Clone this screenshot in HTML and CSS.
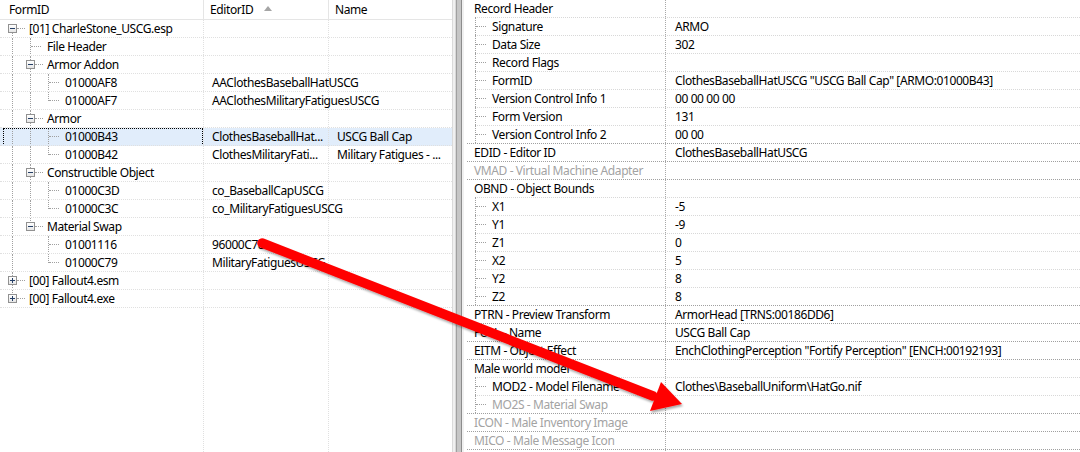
FILE: index.html
```html
<!DOCTYPE html>
<html>
<head>
<meta charset="utf-8">
<link rel="stylesheet" href="styles.css">
</head>
<body>
<div class="left">
  <div class="hdr">
    <div class="h1">FormID</div>
    <div class="h2">EditorID <span class="sort"></span></div>
    <div class="h3">Name</div>
  </div>
  <div class="rows">
    <div class="row"><div class="c1"><span class="g box dn"><i class="ex"></i></span><span class="lbl">[01] CharleStone_USCG.esp</span></div><div class="c2"></div><div class="c3"></div></div>
    <div class="row"><div class="c1"><span class="g v"></span><span class="g t"></span><span class="lbl">File Header</span></div><div class="c2"></div><div class="c3"></div></div>
    <div class="row"><div class="c1"><span class="g v"></span><span class="g box up dn"><i class="ex"></i></span><span class="lbl">Armor Addon</span></div><div class="c2"></div><div class="c3"></div></div>
    <div class="row"><div class="c1"><span class="g v"></span><span class="g v"></span><span class="g t"></span><span class="lbl">01000AF8</span></div><div class="c2">AAClothesBaseballHatUSCG</div><div class="c3"></div></div>
    <div class="row"><div class="c1"><span class="g v"></span><span class="g v"></span><span class="g l"></span><span class="lbl">01000AF7</span></div><div class="c2">AAClothesMilitaryFatiguesUSCG</div><div class="c3"></div></div>
    <div class="row"><div class="c1"><span class="g v"></span><span class="g box up dn"><i class="ex"></i></span><span class="lbl">Armor</span></div><div class="c2"></div><div class="c3"></div></div>
    <div class="row sel"><div class="c1"><span class="g v"></span><span class="g v"></span><span class="g t"></span><span class="lbl">01000B43</span></div><div class="c2">ClothesBaseballHat...</div><div class="c3">USCG Ball Cap</div></div>
    <div class="row"><div class="c1"><span class="g v"></span><span class="g v"></span><span class="g l"></span><span class="lbl">01000B42</span></div><div class="c2">ClothesMilitaryFati...</div><div class="c3">Military Fatigues - ...</div></div>
    <div class="row"><div class="c1"><span class="g v"></span><span class="g box up dn"><i class="ex"></i></span><span class="lbl">Constructible Object</span></div><div class="c2"></div><div class="c3"></div></div>
    <div class="row"><div class="c1"><span class="g v"></span><span class="g v"></span><span class="g t"></span><span class="lbl">01000C3D</span></div><div class="c2">co_BaseballCapUSCG</div><div class="c3"></div></div>
    <div class="row"><div class="c1"><span class="g v"></span><span class="g v"></span><span class="g l"></span><span class="lbl">01000C3C</span></div><div class="c2">co_MilitaryFatiguesUSCG</div><div class="c3"></div></div>
    <div class="row"><div class="c1"><span class="g v"></span><span class="g box up"><i class="ex"></i></span><span class="lbl">Material Swap</span></div><div class="c2"></div><div class="c3"></div></div>
    <div class="row"><div class="c1"><span class="g v"></span><span class="g"></span><span class="g t"></span><span class="lbl">01001116</span></div><div class="c2">96000C78</div><div class="c3"></div></div>
    <div class="row"><div class="c1"><span class="g v"></span><span class="g"></span><span class="g l"></span><span class="lbl">01000C79</span></div><div class="c2">MilitaryFatiguesUSCG</div><div class="c3"></div></div>
    <div class="row"><div class="c1"><span class="g box up dn"><i class="ex plus"></i></span><span class="lbl">[00] Fallout4.esm</span></div><div class="c2"></div><div class="c3"></div></div>
    <div class="row"><div class="c1"><span class="g box up"><i class="ex plus"></i></span><span class="lbl">[00] Fallout4.exe</span></div><div class="c2"></div><div class="c3"></div></div>
  </div>
  <div class="filler"><div></div><div></div><div></div></div>
</div>
<div class="splitter"></div>
<div class="right">
  <div class="prow first"><div class="lab"><span class="tx">Record Header</span></div><div class="val"></div></div>
  <div class="prow ch"><div class="lab"><span class="g t"></span><span class="tx">Signature</span></div><div class="val">ARMO</div></div>
  <div class="prow ch"><div class="lab"><span class="g t"></span><span class="tx">Data Size</span></div><div class="val">302</div></div>
  <div class="prow ch"><div class="lab"><span class="g t"></span><span class="tx">Record Flags</span></div><div class="val"></div></div>
  <div class="prow ch"><div class="lab"><span class="g t"></span><span class="tx">FormID</span></div><div class="val">ClothesBaseballHatUSCG "USCG Ball Cap" [ARMO:01000B43]</div></div>
  <div class="prow ch"><div class="lab"><span class="g t"></span><span class="tx">Version Control Info 1</span></div><div class="val">00 00 00 00</div></div>
  <div class="prow ch"><div class="lab"><span class="g t"></span><span class="tx">Form Version</span></div><div class="val">131</div></div>
  <div class="prow ch"><div class="lab"><span class="g l"></span><span class="tx">Version Control Info 2</span></div><div class="val">00 00</div></div>
  <div class="prow"><div class="lab"><span class="tx">EDID - Editor ID</span></div><div class="val">ClothesBaseballHatUSCG</div></div>
  <div class="prow dis"><div class="lab"><span class="tx">VMAD - Virtual Machine Adapter</span></div><div class="val"></div></div>
  <div class="prow"><div class="lab"><span class="tx">OBND - Object Bounds</span></div><div class="val"></div></div>
  <div class="prow ch"><div class="lab"><span class="g t"></span><span class="tx">X1</span></div><div class="val">-5</div></div>
  <div class="prow ch"><div class="lab"><span class="g t"></span><span class="tx">Y1</span></div><div class="val">-9</div></div>
  <div class="prow ch"><div class="lab"><span class="g t"></span><span class="tx">Z1</span></div><div class="val">0</div></div>
  <div class="prow ch"><div class="lab"><span class="g t"></span><span class="tx">X2</span></div><div class="val">5</div></div>
  <div class="prow ch"><div class="lab"><span class="g t"></span><span class="tx">Y2</span></div><div class="val">8</div></div>
  <div class="prow ch"><div class="lab"><span class="g l"></span><span class="tx">Z2</span></div><div class="val">8</div></div>
  <div class="prow"><div class="lab"><span class="tx">PTRN - Preview Transform</span></div><div class="val">ArmorHead [TRNS:00186DD6]</div></div>
  <div class="prow"><div class="lab"><span class="tx">FULL - Name</span></div><div class="val">USCG Ball Cap</div></div>
  <div class="prow"><div class="lab"><span class="tx">EITM - Object Effect</span></div><div class="val">EnchClothingPerception "Fortify Perception" [ENCH:00192193]</div></div>
  <div class="prow"><div class="lab"><span class="tx">Male world model</span></div><div class="val"></div></div>
  <div class="prow ch"><div class="lab"><span class="g t"></span><span class="tx">MOD2 - Model Filename</span></div><div class="val">Clothes\BaseballUniform\HatGo.nif</div></div>
  <div class="prow ch dis"><div class="lab"><span class="g l"></span><span class="tx">MO2S - Material Swap</span></div><div class="val"></div></div>
  <div class="prow dis"><div class="lab"><span class="tx">ICON - Male Inventory Image</span></div><div class="val"></div></div>
  <div class="prow dis"><div class="lab"><span class="tx">MICO - Male Message Icon</span></div><div class="val"></div></div>
  <div class="prow"><div class="lab"><span class="tx"></span></div><div class="val"></div></div>
</div>
<svg class="arrow" width="1080" height="452" viewBox="0 0 1080 452">
  <defs>
    <filter id="sh" x="-10%" y="-10%" width="120%" height="130%">
      <feDropShadow dx="1" dy="2" stdDeviation="1" flood-color="#000" flood-opacity="0.35"/>
    </filter>
  </defs>
  <g filter="url(#sh)">
    <line x1="262" y1="243" x2="653" y2="396" stroke="#ff0000" stroke-width="9.5" stroke-linecap="round"/>
    <polygon points="682,404 650,411 661,382" fill="#ff0000"/>
  </g>
</svg>
</body>
</html>
```
FILE: styles.css
```css
* { box-sizing: border-box; }
html, body { margin: 0; height: 452px; overflow: hidden; background: #fff; }
body {
  font-family: "Noto Sans", "Open Sans", sans-serif;
  font-size: 12px;
  letter-spacing: -0.4px;
  color: #000;
  display: flex;
  position: relative;
}

/* ---------- left pane ---------- */
.left {
  width: 453px;
  flex: none;
  border-right: 1px solid #dadada;
  display: flex;
  flex-direction: column;
}
.hdr {
  height: 20px;
  flex: none;
  display: grid;
  grid-template-columns: 204px 125px 123px;
  border-bottom: 1px solid #e5e5e5;
}
.hdr > div {
  line-height: 19px;
  border-right: 1px solid #e5e5e5;
  padding-left: 6px;
  white-space: nowrap;
}
.hdr .h1 { padding-left: 9px; }
.hdr .h3 { border-right: none; }
.sort {
  display: inline-block;
  width: 0; height: 0;
  border-left: 4.5px solid transparent;
  border-right: 4.5px solid transparent;
  border-bottom: 5px solid #a5a5a5;
  margin-left: 8px;
  vertical-align: 3px;
}
.rows { flex: none; }
.row {
  display: grid;
  grid-template-columns: 204px 125px 123px;
  height: 18px;
  border-bottom: 1px dotted #e0e0e0;
}
.row > div {
  line-height: 17px;
  white-space: nowrap;
  overflow: hidden;
  border-right: 1px dotted #e0e0e0;
}
.row > .c3 { border-right: none; }
.c1 {
  display: flex;
  padding-left: 3px;
  position: relative;
}
.c2, .c3 { padding-left: 8px; }
.row > .c2 { overflow: visible; }
.lbl { margin-left: 8px; }
.row.sel { background: #e1edfb; }
.row.sel .c1::after {
  content: "";
  position: absolute;
  left: 3px; top: 0; right: 0; bottom: -1px;
  border: 1px dotted #000;
}
.filler {
  flex: 1;
  display: grid;
  grid-template-columns: 204px 125px 123px;
}
.filler > div { border-right: 1px dotted #e0e0e0; }
.filler > div:last-child { border-right: none; }

/* tree guides */
.g {
  width: 18px;
  flex: none;
  position: relative;
}
.g.v::before, .g.t::before, .g.l::before, .g.box::before {
  content: "";
  position: absolute;
  left: 9px;
  top: 0;
  bottom: -1px;
  border-left: 1px dotted #a0a0a0;
}
.g.l::before { bottom: 50%; }
.g.t::after, .g.l::after {
  content: "";
  position: absolute;
  left: 10px;
  width: 10px;
  top: 8px;
  border-top: 1px dotted #a0a0a0;
}
.g.box::before { display: none; }
.g.box.up::before, .g.box.dn::before { display: block; }
.g.box.up::before { top: 0; bottom: 50%; }
.g.box.dn::before { top: 50%; bottom: -1px; }
.g.box.up.dn::before { top: 0; bottom: -1px; }
.g.box::after {
  content: "";
  position: absolute;
  left: 14px;
  width: 8px;
  top: 8px;
  border-top: 1px dotted #a0a0a0;
}
.ex {
  position: absolute;
  left: 5px;
  top: 4px;
  width: 9px;
  height: 9px;
  border: 1px solid #919191;
  background: linear-gradient(#ffffff, #e6e6e6);
  z-index: 1;
}
.ex::before {
  content: "";
  position: absolute;
  left: 1px; top: 3px;
  width: 5px; height: 1px;
  background: #253f66;
}
.ex.plus::after {
  content: "";
  position: absolute;
  left: 3px; top: 1px;
  width: 1px; height: 5px;
  background: #253f66;
}

/* ---------- splitter ---------- */
.splitter {
  width: 11px;
  flex: none;
  background: linear-gradient(to right,
    #f0f0f0 0 2px, #d8d8d8 2px 3px, #a0a0a0 3px 4px,
    #c6c6c6 4px 8px, #8c8c8c 8px 9px, #f0f0f0 9px 11px);
}

/* ---------- right pane ---------- */
.right {
  flex: 1;
  overflow: hidden;
  display: flex;
  flex-direction: column;
}
.prow {
  display: grid;
  grid-template-columns: 201px 1fr;
  height: 18px;
  flex: none;
  position: relative;
}
.prow::before {
  content: "";
  position: absolute;
  left: 3px; right: 0; top: 0;
  border-top: 1px dotted #a0a0a0;
}
.prow.ch::before {
  left: 11px;
  border-top-color: #d8d8d8;
}
.prow.first { height: 17px; }
.prow.first::before { display: none; }
.lab {
  display: flex;
  padding-left: 2px;
  white-space: nowrap;
  overflow: hidden;
}
.tx {
  margin-left: 8px;
  padding-top: 1px;
  line-height: 17px;
}
.prow.first .tx, .prow.first .val { padding-top: 0; }
.prow .g.t::after, .prow .g.l::after { top: 9px; }
.prow .g::before { bottom: 0; }
.val {
  border-left: 1px dotted #a8a8a8;
  padding-left: 9px;
  padding-top: 1px;
  line-height: 17px;
  white-space: nowrap;
  overflow: hidden;
}
.prow.dis { color: #a3a3a3; }

/* ---------- annotation arrow ---------- */
.arrow {
  position: absolute;
  left: 0; top: 0;
  pointer-events: none;
}
```
